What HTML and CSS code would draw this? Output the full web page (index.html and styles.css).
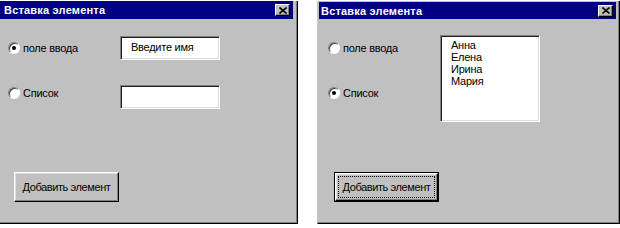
FILE: index.html
```html
<!DOCTYPE html>
<html lang="ru">
<head>
    <meta charset="UTF-8">
    <title>Вставка элемента</title>
    <link rel="stylesheet" href="styles.css">
</head>
<body>
<div class="screen">

    <!-- Text input variant -->
    <div class="dialog dialog-input">
        <div class="title">
            <span>Вставка элемента</span>
            <span class="close">
                <svg width="8" height="7" viewBox="0 0 8 7"><path d="M0.5 0.5L7.5 6.5M7.5 0.5L0.5 6.5" stroke="#000" stroke-width="1.6"/></svg>
            </span>
        </div>
        <div class="dialog-body">
            <div class="fields">
                <div class="options">
                    <label class="option"><span class="radio checked"></span>поле ввода</label>
                    <label class="option"><span class="radio"></span>Список</label>
                </div>
                <div class="controls">
                    <div class="textbox">Введите имя</div>
                    <div class="textbox"></div>
                </div>
            </div>
            <div class="actions">
                <button class="btn">Добавить элемент</button>
            </div>
        </div>
    </div>

    <!-- List variant -->
    <div class="dialog dialog-list">
        <div class="title">
            <span>Вставка элемента</span>
            <span class="close">
                <svg width="8" height="7" viewBox="0 0 8 7"><path d="M0.5 0.5L7.5 6.5M7.5 0.5L0.5 6.5" stroke="#000" stroke-width="1.6"/></svg>
            </span>
        </div>
        <div class="dialog-body">
            <div class="fields">
                <div class="options">
                    <label class="option"><span class="radio"></span>поле ввода</label>
                    <label class="option"><span class="radio checked"></span>Список</label>
                </div>
                <div class="controls">
                    <ul class="listbox">
                        <li>Анна</li>
                        <li>Елена</li>
                        <li>Ирина</li>
                        <li>Мария</li>
                    </ul>
                </div>
            </div>
            <div class="actions">
                <button class="btn btn-default"><span class="focus">Добавить элемент</span></button>
            </div>
        </div>
    </div>

</div>
</body>
</html>
```

FILE: styles.css
```css
* {
    box-sizing: border-box;
}
body {
    margin: 0;
    background: #ffffff;
    font-family: "Liberation Sans", Arial, sans-serif;
    font-size: 11px;
    letter-spacing: -0.25px;
    color: #000;
}
.screen {
    display: flex;
    gap: 19px;
    padding-top: 1px;
}
.dialog {
    height: 223px;
    background: #c0c0c0;
    border-right: 1px solid #000;
    border-bottom: 1px solid #000;
    box-shadow: inset -1px -1px #808080;
    display: flex;
    flex-direction: column;
}
.dialog-input {
    width: 298px;
}
.dialog-list {
    width: 303px;
    border-left: 1px dashed #b5d6b5;
}
.title {
    height: 18px;
    background: #000080;
    color: #fff;
    font-weight: bold;
    font-size: 11px;
    letter-spacing: 0.2px;
    display: flex;
    align-items: center;
    justify-content: space-between;
    padding: 0 3px 0 4px;
    margin-right: 4px;
}
.dialog-list .title {
    margin: 1px 3px 0 1px;
    height: 17px;
    padding-left: 2px;
}
.close {
    width: 15px;
    height: 12px;
    background: #c0c0c0;
    border: 1px solid;
    border-color: #fff #000 #000 #fff;
    box-shadow: inset -1px -1px #808080;
    display: flex;
    align-items: center;
    justify-content: center;
}
.dialog-body {
    flex: 1;
    display: flex;
    flex-direction: column;
    padding-bottom: 21px;
}
.fields {
    display: flex;
}
.options {
    display: flex;
    flex-direction: column;
    gap: 32px;
    padding-top: 22px;
    padding-left: 8px;
    width: 120px;
}
.dialog-list .options {
    padding-left: 10px;
    width: 122px;
}
.option {
    display: flex;
    align-items: center;
    gap: 3px;
    height: 13px;
}
.radio {
    width: 12px;
    height: 12px;
    border-radius: 50%;
    background: #fff;
    border: 1px solid;
    border-color: #808080 #fff #fff #808080;
    box-shadow: inset 1px 1px #404040;
    display: flex;
    align-items: center;
    justify-content: center;
}
.radio.checked::after {
    content: "";
    width: 4px;
    height: 4px;
    border-radius: 50%;
    background: #000;
}
.controls {
    display: flex;
    flex-direction: column;
    gap: 25px;
    padding-top: 17px;
}
.dialog-list .controls {
    padding-top: 16px;
}
.textbox, .listbox {
    width: 100px;
    background: #fff;
    border: 1px solid;
    border-color: #808080 #fff #fff #808080;
    box-shadow: inset 1px 1px #202020, inset -1px -1px #dfdfdf;
}
.textbox {
    height: 24px;
    padding: 3px 0 0 10px;
    line-height: 14px;
}
.listbox {
    height: 87px;
    margin: 0;
    padding: 3px 0 0 10px;
    list-style: none;
    line-height: 12px;
}
.actions {
    margin-top: auto;
    padding-left: 14px;
}
.dialog-list .actions {
    padding-left: 16px;
}
.btn {
    width: 105px;
    height: 30px;
    font-family: inherit;
    font-size: 11px;
    letter-spacing: -0.4px;
    color: #000;
    background: #c0c0c0;
    border: 1px solid;
    border-color: #fff #000 #000 #fff;
    box-shadow: inset -1px -1px #808080, inset 1px 1px #dfdfdf;
    padding: 0;
}
.btn-default {
    border: 2px solid;
    border-color: #fff #000 #000 #fff;
    outline: 1px solid #000;
    outline-offset: -1px;
    padding: 2px;
}
.focus {
    display: flex;
    align-items: center;
    justify-content: center;
    height: 100%;
    border: 1px dotted #000;
}
```
